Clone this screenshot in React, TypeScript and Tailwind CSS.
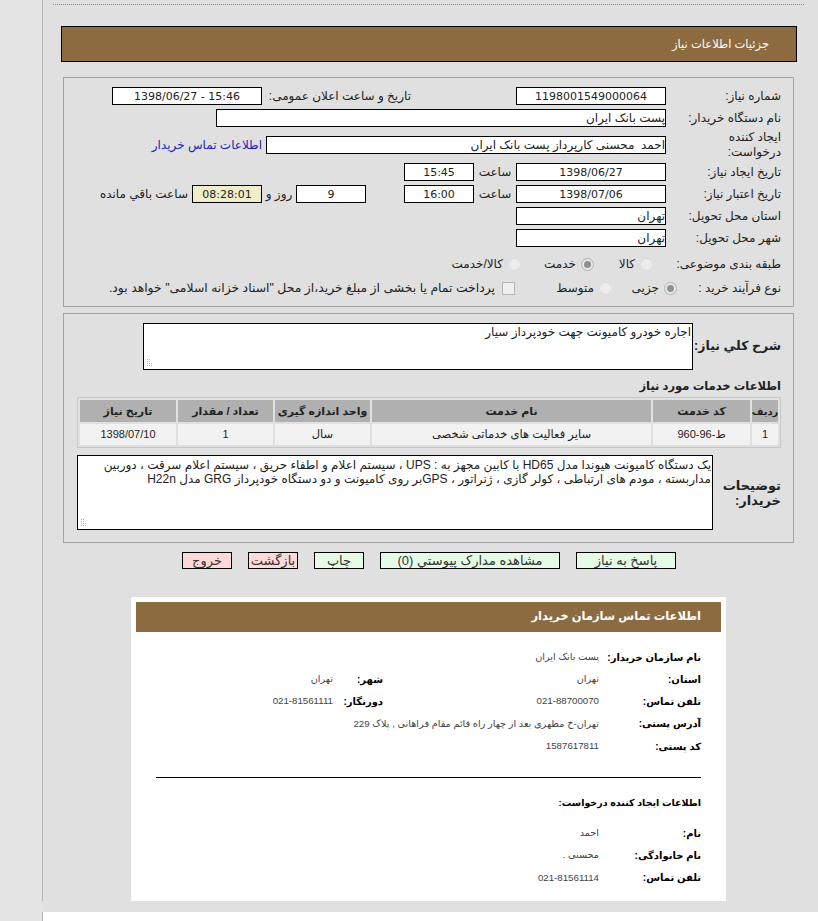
const bf = { fontFamily: '"Liberation Sans","DejaVu Sans",sans-serif' };

function Field({ w, children, center = true, bg = "bg-white", num = false }: { w: string; children?: React.ReactNode; center?: boolean; bg?: string; num?: boolean }) {
  return (
    <div className={`${w} ${bg} ${num ? "font-['DejaVu_Sans'] text-[11px]" : "text-[12px]"} shrink-0 border border-black h-[18px] flex items-center ${center ? "justify-center" : "justify-start"} leading-none text-[#222] whitespace-pre overflow-hidden`}>
      {children}
    </div>
  );
}

function Label({ children, w = "w-[115px]", extra = "" }: { children: React.ReactNode; w?: string; extra?: string }) {
  return <div className={`${w} ${extra} shrink-0 text-[12px] leading-[15px] text-[#222]`}>{children}</div>;
}

function Radio({ on }: { on?: boolean }) {
  return (
    <span className={`w-[13px] h-[13px] rounded-full border ${on ? "border-[#b0b0b0] bg-[#e8e8e8]" : "border-[#dcdcdc] bg-[#ececec]"} flex items-center justify-center shrink-0`}>
      {on && <span className="w-[7px] h-[7px] rounded-full bg-[#909090]" />}
    </span>
  );
}

function Btn({ w, tone, children }: { w: string; tone: "g" | "r"; children: React.ReactNode }) {
  return (
    <div className={`${w} h-[17px] border border-black ${tone === "g" ? "bg-[#e6fbe6]" : "bg-[#ffd8d8]"} flex items-center justify-center text-[13px] leading-none text-[#333] whitespace-nowrap`}>
      {children}
    </div>
  );
}

function Grip() {
  return (
    <svg className="absolute left-[2px] bottom-[2px]" width="9" height="9" viewBox="0 0 9 9" fill="#b5b5b5">
      <rect x="1" y="1" width="1" height="1" /><rect x="3" y="1" width="1" height="1" />
      <rect x="1" y="3" width="1" height="1" /><rect x="3" y="3" width="1" height="1" />
      <rect x="1" y="5" width="1" height="1" /><rect x="3" y="5" width="1" height="1" /><rect x="5" y="5" width="1" height="1" />
      <rect x="1" y="7" width="1" height="1" /><rect x="3" y="7" width="1" height="1" /><rect x="5" y="7" width="1" height="1" />
    </svg>
  );
}

function Info({ label, value, lw = "w-[102px]" }: { label: string; value: React.ReactNode; lw?: string }) {
  return (
    <div className="flex items-center h-[22.25px]">
      <div className={`${lw} shrink-0 text-[10px] font-bold text-black whitespace-nowrap`}>{label}</div>
      <div className="text-[9.7px] text-[#444] whitespace-nowrap">{value}</div>
    </div>
  );
}

export default function App() {
  return (
    <div dir="ltr" style={bf} className="w-[818px] h-[921px] overflow-hidden bg-white flex">
      <div className="w-[42px] shrink-0 bg-[#e4e4e4]" />
      <div className="flex-1 flex flex-col">
        <div className="h-[901px] shrink-0 bg-[#e0e0e0] border-l border-[#b4b4b4] flex flex-col pl-[10px]" dir="rtl">
          <div className="mt-[4px] mr-[14px] w-[751px] border-t border-dotted border-[#888]" />
          <div className="mt-[21px] mr-[21px] w-[736px] h-[36px] bg-[#8b6b3f] border border-black flex items-center pr-[27px] pt-[1px] text-[11.5px] text-white">
            جزئیات اطلاعات نیاز
          </div>

          <div className="mt-[15px] mr-[24px] w-[731px] h-[230px] border border-[#a3a3a3] pr-[12px] pt-[9px] flex flex-col">
            <div className="flex items-center h-[18px]">
              <Label>شماره نیاز:</Label>
              <Field w="w-[150px]" num>1198001549000064</Field>
              <div className="w-[254px] pr-[105px] text-[12px] text-[#222] whitespace-nowrap shrink-0">تاریخ و ساعت اعلان عمومی:</div>
              <Field w="w-[150px]" num><span dir="ltr">1398/06/27 - 15:46</span></Field>
            </div>
            <div className="flex items-center h-[18px] mt-[4px]">
              <Label>نام دستگاه خریدار:</Label>
              <Field w="w-[450px]" center={false}>پست بانک ایران</Field>
            </div>
            <div className="flex items-center h-[18px] mt-[9px]">
              <Label extra="pl-[40px]">ایجاد کننده درخواست:</Label>
              <Field w="w-[400px]" center={false}>احمد  محسنی کارپرداز پست بانک ایران</Field>
              <div className="pr-[4px] text-[12px] text-[#2222bb] whitespace-nowrap">اطلاعات تماس خریدار</div>
            </div>
            <div className="flex items-center h-[18px] mt-[9px]">
              <Label>تاریخ ایجاد نیاز:</Label>
              <Field w="w-[150px]" num>1398/06/27</Field>
              <div className="w-[42px] text-[12px] text-[#222] text-center shrink-0">ساعت</div>
              <Field w="w-[70px]" num>15:45</Field>
            </div>
            <div className="flex items-center h-[18px] mt-[4px]">
              <Label>تاریخ اعتبار نیاز:</Label>
              <Field w="w-[150px]" num>1398/07/06</Field>
              <div className="w-[42px] text-[12px] text-[#222] text-center shrink-0">ساعت</div>
              <Field w="w-[70px]" num>16:00</Field>
              <div className="w-[38px] shrink-0" />
              <Field w="w-[70px]" num>9</Field>
              <div className="w-[34px] text-[12px] text-[#222] text-center shrink-0">روز و</div>
              <Field w="w-[70px]" bg="bg-[#f0edc9]" num>08:28:01</Field>
              <div className="pr-[4px] text-[12px] text-[#222] whitespace-nowrap">ساعت باقي مانده</div>
            </div>
            <div className="flex items-center h-[18px] mt-[4px]">
              <Label>استان محل تحویل:</Label>
              <Field w="w-[150px]" center={false}>تهران</Field>
            </div>
            <div className="flex items-center h-[18px] mt-[4px]">
              <Label>شهر محل تحویل:</Label>
              <Field w="w-[150px]" center={false}>تهران</Field>
            </div>
            <div className="flex items-center h-[18px] mt-[8px] text-[12px] text-[#222]">
              <Label>طبقه بندی موضوعی:</Label>
              <div className="flex items-center gap-[5px] w-[72px] shrink-0 pr-[13px]"><Radio /><span>کالا</span></div>
              <div className="flex items-center gap-[5px] w-[73px] shrink-0"><Radio on /><span>خدمت</span></div>
              <div className="flex items-center gap-[5px] shrink-0"><Radio /><span className="whitespace-nowrap">کالا/خدمت</span></div>
            </div>
            <div className="flex items-center h-[18px] mt-[6px] text-[12px] text-[#222]">
              <Label w="w-[104px]">نوع فرآیند خرید :</Label>
              <div className="flex items-center gap-[5px] w-[65px] shrink-0"><Radio on /><span>جزیی</span></div>
              <div className="flex items-center gap-[5px] w-[97px] shrink-0"><Radio /><span>متوسط</span></div>
              <div className="flex items-center gap-[7px] shrink-0 whitespace-nowrap">
                <span className="w-[13px] h-[13px] border border-[#b5b5b5] bg-[#efefef] shrink-0" />
                <span className="text-[12.4px]">پرداخت تمام یا بخشی از مبلغ خرید،از محل "اسناد خزانه اسلامی" خواهد بود.</span>
              </div>
            </div>
          </div>

          <div className="mt-[6px] mr-[24px] w-[731px] h-[230px] border border-[#a3a3a3] pr-[12px] pt-[9px] flex flex-col">
            <div className="flex items-center h-[47px]">
              <div className="w-[88px] shrink-0 text-[12.5px] font-bold text-[#222] whitespace-nowrap">شرح كلي نیاز:</div>
              <div className="relative w-[550px] h-[47px] bg-white border border-black text-[12px] leading-[14px] text-[#222] pr-[1px] pt-[1px]">
                اجاره خودرو کامیونت جهت خودپرداز سیار
                <Grip />
              </div>
            </div>
            <div className="mt-[8px] text-[11.5px] leading-[16px] font-bold text-[#222]">اطلاعات خدمات مورد نیاز</div>
            <div className="mt-[3px] w-[704px] h-[51px] border border-[#c8c8c8] p-[2px] flex flex-col gap-[2px] text-[11px] text-[#222]">
              <div className="flex h-[23px] gap-[2px] font-bold">
                <div className="w-[26px] bg-[#b0b0b0] flex items-center justify-center text-[10px]">ردیف</div>
                <div className="w-[97px] bg-[#b0b0b0] flex items-center justify-center">کد خدمت</div>
                <div className="w-[279px] bg-[#b0b0b0] flex items-center justify-center">نام خدمت</div>
                <div className="w-[95px] bg-[#b0b0b0] flex items-center justify-center">واحد اندازه گیری</div>
                <div className="w-[95px] bg-[#b0b0b0] flex items-center justify-center">تعداد / مقدار</div>
                <div className="flex-1 bg-[#b0b0b0] flex items-center justify-center">تاریخ نیاز</div>
              </div>
              <div className="flex h-[21px] gap-[2px] text-[11.5px]">
                <div className="w-[26px] bg-[#f2f2f2] flex items-center justify-center text-[11px]">1</div>
                <div className="w-[97px] bg-[#f2f2f2] flex items-center justify-center text-[11px]">ط-96-960</div>
                <div className="w-[279px] bg-[#f2f2f2] flex items-center justify-center">سایر فعالیت های خدماتی شخصی</div>
                <div className="w-[95px] bg-[#f2f2f2] flex items-center justify-center">سال</div>
                <div className="w-[95px] bg-[#f2f2f2] flex items-center justify-center text-[11px]">1</div>
                <div className="flex-1 bg-[#f2f2f2] flex items-center justify-center text-[11px]">1398/07/10</div>
              </div>
            </div>
            <div className="flex items-center mt-[7px]">
              <div className="w-[68px] shrink-0 text-[13px] leading-[15px] font-bold text-[#222]">توضیحات خریدار:</div>
              <div className="relative w-[636px] h-[75px] bg-white border border-black text-[12px] leading-[14px] text-[#222] pr-[1px] pl-[4px] pt-[2px]">
                یک دستگاه کامیونت هیوندا مدل HD65 با کابین مجهز به : UPS ، سیستم اعلام و اطفاء حریق ، سیستم اعلام سرقت ، دوربین مداربسته ، مودم های ارتباطی ، کولر گازی ، ژنراتور ، GPSبر روی کامیونت و دو دستگاه خودپرداز GRG مدل H22n
                <Grip />
              </div>
            </div>
          </div>

          <div className="mt-[9px] mr-[142px] flex gap-[16px]">
            <Btn w="w-[100px]" tone="g">پاسخ به نیاز</Btn>
            <Btn w="w-[180px]" tone="g">مشاهده مدارک پیوستي (0)</Btn>
            <Btn w="w-[50px]" tone="g">چاپ</Btn>
            <Btn w="w-[50px]" tone="r">بازگشت</Btn>
            <Btn w="w-[50px]" tone="r">خروج</Btn>
          </div>

          <div className="mt-[28px] mr-[92px] w-[595px] h-[304px] bg-white pt-[5px] px-[5px]">
            <div className="h-[30px] bg-[#8b6b3f] flex items-center pr-[20px] text-[11.5px] font-bold text-white">
              اطلاعات تماس سازمان خریدار
            </div>
            <div className="pr-[20px] pt-[14px]">
              <Info label="نام سازمان خریدار:" value="پست بانک ایران" />
              <div className="flex">
                <div className="w-[318px]"><Info label="استان:" value="تهران" /></div>
                <Info lw="w-[50px]" label="شهر:" value="تهران" />
              </div>
              <div className="flex">
                <div className="w-[318px]"><Info label="تلفن تماس:" value="021-88700070" /></div>
                <Info lw="w-[50px]" label="دورنگار:" value="021-81561111" />
              </div>
              <Info label="آدرس پستی:" value="تهران-خ مطهری بعد از چهار راه قائم مقام فراهانی , پلاک 229" />
              <Info label="کد پستی:" value="1587617811" />
              <div className="mt-[20px] w-[545px] border-t border-black" />
              <div className="mt-[14px] h-[22px] flex items-center text-[9.5px] font-bold text-black">اطلاعات ایجاد کننده درخواست:</div>
              <div className="mt-[8px]">
                <Info label="نام:" value="احمد" />
                <Info label="نام خانوادگی:" value="محسنی ." />
                <Info label="تلفن تماس:" value="021-81561114" />
              </div>
            </div>
          </div>
        </div>
        <div className="h-[11px] shrink-0 bg-[#e0e0e0]" />
        <div className="flex-1 bg-white border-l border-[#b4b4b4]" />
      </div>
    </div>
  );
}
